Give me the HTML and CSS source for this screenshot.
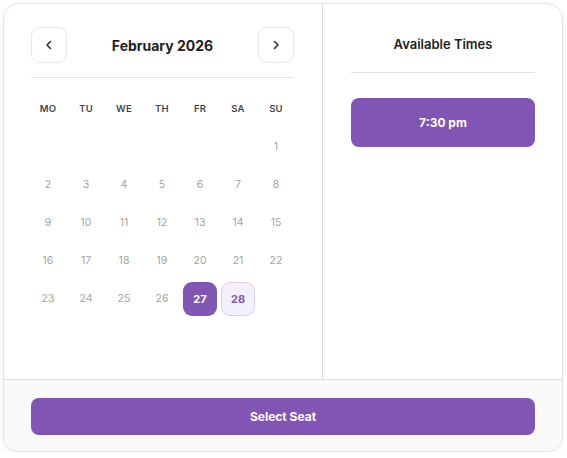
FILE: index.html
```html
<!DOCTYPE html>
<html>
<head>
<meta charset="utf-8">
<link rel="stylesheet" href="styles.css">
</head>
<body>
<div class="card">
  <div class="main">
    <div class="cal">
      <div class="cal-head">
        <button class="nav"><svg width="10" height="10" viewBox="0 0 10 10"><path d="M6.5 1.5 L3 5 L6.5 8.5" fill="none" stroke="#333" stroke-width="1.6" stroke-linecap="round" stroke-linejoin="round"/></svg></button>
        <div class="month">February 2026</div>
        <button class="nav"><svg width="10" height="10" viewBox="0 0 10 10"><path d="M3.5 1.5 L7 5 L3.5 8.5" fill="none" stroke="#333" stroke-width="1.6" stroke-linecap="round" stroke-linejoin="round"/></svg></button>
      </div>
      <div class="grid">
        <div class="wd">MO</div><div class="wd">TU</div><div class="wd">WE</div><div class="wd">TH</div><div class="wd">FR</div><div class="wd">SA</div><div class="wd">SU</div>
        <div></div><div></div><div></div><div></div><div></div><div></div><div class="d">1</div>
        <div class="d">2</div><div class="d">3</div><div class="d">4</div><div class="d">5</div><div class="d">6</div><div class="d">7</div><div class="d">8</div>
        <div class="d">9</div><div class="d">10</div><div class="d">11</div><div class="d">12</div><div class="d">13</div><div class="d">14</div><div class="d">15</div>
        <div class="d">16</div><div class="d">17</div><div class="d">18</div><div class="d">19</div><div class="d">20</div><div class="d">21</div><div class="d">22</div>
        <div class="d">23</div><div class="d">24</div><div class="d">25</div><div class="d">26</div><div class="d sel">27</div><div class="d avail">28</div><div></div>
      </div>
    </div>
    <div class="times">
      <div class="times-title">Available Times</div>
      <button class="slot">7:30 pm</button>
    </div>
  </div>
  <div class="footer">
    <button class="cta">Select Seat</button>
  </div>
</div>
</body>
</html>
```
FILE: styles.css
```css
* { box-sizing: border-box; }
html, body { margin: 0; padding: 0; background: #fff; }
body { font-family: Inter, "Liberation Sans", sans-serif; }
button { font-family: inherit; cursor: pointer; }

.card {
  margin: 3px 0 0 3px;
  width: 560px;
  height: 449px;
  border: 1px solid #e3e3e3;
  border-radius: 16px;
  overflow: hidden;
  background: #fff;
  box-shadow: 0 2px 6px rgba(0,0,0,0.06);
  display: flex;
  flex-direction: column;
}

.main {
  height: 375px;
  display: grid;
  grid-template-columns: 319px 1fr;
}

.cal {
  border-right: 1px solid #dcdcdc;
  padding: 23px 28px 0 27px;
}

.cal-head {
  display: flex;
  align-items: center;
  justify-content: space-between;
  padding-bottom: 14px;
  border-bottom: 1px solid #e2e2e2;
}

.nav {
  width: 36px;
  height: 36px;
  border: 1px solid #e6e6e6;
  border-radius: 9px;
  background: #fff;
  display: flex;
  align-items: center;
  justify-content: center;
  padding: 0;
}

.month {
  font-size: 14px;
  font-weight: 700;
  color: #222;
}

.grid {
  margin-top: 13px;
  display: grid;
  grid-template-columns: repeat(7, 34px);
  grid-auto-rows: 34px;
  column-gap: 4px;
  row-gap: 4.2px;
}

.wd, .d {
  display: flex;
  align-items: center;
  justify-content: center;
}

.wd {
  font-size: 9.5px;
  font-weight: 600;
  color: #444;
  letter-spacing: 0.2px;
}

.d {
  font-size: 10.5px;
  color: #a3a3a3;
  border-radius: 9px;
}

.d.sel {
  background: #8155b3;
  color: #fff;
  font-weight: 700;
  font-size: 11px;
}

.d.avail {
  background: #f4f0fa;
  border: 1px solid #dccfee;
  color: #8155b3;
  font-weight: 700;
  font-size: 11px;
}

.times {
  padding: 32px 27px 0 28px;
}

.times-title {
  text-align: center;
  font-size: 13px;
  font-weight: 600;
  color: #222;
  padding-bottom: 20px;
  border-bottom: 1px solid #e2e2e2;
}

.slot {
  margin-top: 25px;
  width: 100%;
  height: 49px;
  border: none;
  border-radius: 8px;
  background: #8155b3;
  color: #fff;
  font-size: 12px;
  font-weight: 700;
}

.footer {
  flex: 1;
  background: #f9f9f9;
  border-top: 1px solid #dcdcdc;
  padding: 18px 27px 0 27px;
}

.cta {
  width: 100%;
  height: 37px;
  border: none;
  border-radius: 8px;
  background: #8155b3;
  color: #fff;
  font-size: 12px;
  font-weight: 700;
}
```
